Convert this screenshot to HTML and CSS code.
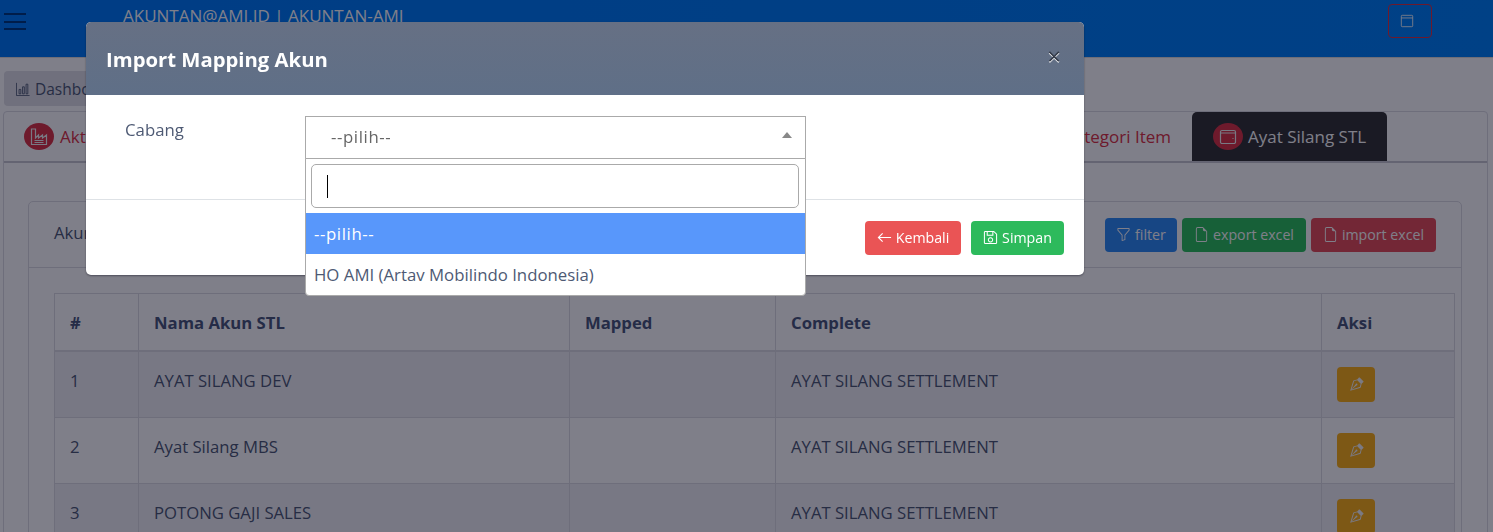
FILE: index.html
```html
<!DOCTYPE html>
<html lang="id">
<head>
    <meta charset="UTF-8">
    <meta name="viewport" content="width=device-width, initial-scale=1.0">
    <title>Import Mapping Akun</title>
    <link rel="stylesheet" href="styles.css">
</head>
<body>
    <svg class="icon-defs" aria-hidden="true">
        <symbol id="i-pen" viewBox="0 0 16 16">
            <path fill="currentColor" fill-rule="evenodd" d="M10.646.646a.5.5 0 0 1 .708 0l4 4a.5.5 0 0 1 0 .708l-1.902 1.902-.829 3.313a1.5 1.5 0 0 1-1.024 1.073L1.254 14.746 4.358 4.4A1.5 1.5 0 0 1 5.43 3.377l3.313-.828L10.646.646zm-1.8 2.908-3.173.793a.5.5 0 0 0-.358.342l-2.57 8.565 8.567-2.57a.5.5 0 0 0 .34-.357l.794-3.174-3.6-3.6z"/>
            <path fill="currentColor" fill-rule="evenodd" d="M2.832 13.228 8 9a1 1 0 1 0-1-1l-4.228 5.168-.026.086.086-.026z"/>
        </symbol>
        <symbol id="i-funnel" viewBox="0 0 16 16">
            <path fill="currentColor" d="M1.5 1.5A.5.5 0 0 1 2 1h12a.5.5 0 0 1 .5.5v2a.5.5 0 0 1-.128.334L10 8.692V13.5a.5.5 0 0 1-.342.474l-3 1A.5.5 0 0 1 6 14.5V8.692L1.628 3.834A.5.5 0 0 1 1.5 3.5v-2zm1 .5v1.308l4.372 4.858A.5.5 0 0 1 7 8.5v5.306l2-.666V8.5a.5.5 0 0 1 .128-.334L13.5 3.308V2h-11z"/>
        </symbol>
        <symbol id="i-file" viewBox="0 0 16 16">
            <path fill="currentColor" d="M14 4.5V14a2 2 0 0 1-2 2H4a2 2 0 0 1-2-2V2a2 2 0 0 1 2-2h5.5L14 4.5zm-3 0A1.5 1.5 0 0 1 9.5 3V1H4a1 1 0 0 0-1 1v12a1 1 0 0 0 1 1h8a1 1 0 0 0 1-1V4.5h-2z"/>
        </symbol>
        <symbol id="i-window" viewBox="0 0 16 16">
            <path fill="none" stroke="currentColor" d="M2.5 1.5h11a1 1 0 0 1 1 1v11a1 1 0 0 1-1 1h-11a1 1 0 0 1-1-1v-11a1 1 0 0 1 1-1zM1.5 4.5h13"/>
        </symbol>
    </svg>

    <div class="page">
        <header class="topbar">
            <div class="burger"><span></span><span></span><span></span></div>
            <div class="user-name">AKUNTAN@AMI.ID | AKUNTAN-AMI</div>
            <button class="top-btn"><svg class="icon-14"><use href="#i-window"/></svg></button>
        </header>

        <nav class="crumb-row">
            <div class="crumb">
                <svg class="icon-14" viewBox="0 0 16 16"><path fill="none" stroke="currentColor" d="M.5 1v14.5H15.5M3.5 8.5h2v5h-2zM7.5 5.5h2v8h-2zM11.5 2.5h2v11h-2z"/></svg>
                Dashboard
            </div>
        </nav>

        <section class="tabs-card">
            <div class="tabs">
                <div class="tab">
                    <span class="tab-icon">
                        <svg class="icon-18" viewBox="0 0 18 18"><path fill="none" stroke="currentColor" stroke-width="1.2" d="M1.5 1v15.5h15V7l-4 3V7l-4 3V7l-3 3V1zM4.5 12.5h9M4.5 14.5h9"/></svg>
                    </span>
                    Aktiva Tetap
                </div>
                <div class="tab tab-push">
                    Kategori Item
                </div>
                <div class="tab tab-active">
                    <span class="tab-icon">
                        <svg class="icon-18" viewBox="0 0 18 18"><path fill="none" stroke="currentColor" stroke-width="1.2" d="M3 2.5h12a1.5 1.5 0 0 1 1.5 1.5v10a1.5 1.5 0 0 1-1.5 1.5H3A1.5 1.5 0 0 1 1.5 14V4A1.5 1.5 0 0 1 3 2.5zM1.5 5h15M13.5 10.5h1"/></svg>
                    </span>
                    Ayat Silang STL
                </div>
            </div>

            <div class="card">
                <div class="card-head">
                    <span class="card-title">Akun Ayat Silang STL</span>
                    <div class="card-actions">
                        <button class="btn btn-blue"><svg class="icon-16"><use href="#i-funnel"/></svg>filter</button>
                        <button class="btn btn-green"><svg class="icon-16"><use href="#i-file"/></svg>export excel</button>
                        <button class="btn btn-red"><svg class="icon-16"><use href="#i-file"/></svg>import excel</button>
                    </div>
                </div>
                <div class="card-body">
                    <table class="data-table">
                        <thead>
                            <tr>
                                <th class="col-no">#</th>
                                <th class="col-name">Nama Akun STL</th>
                                <th class="col-mapped">Mapped</th>
                                <th class="col-complete">Complete</th>
                                <th>Aksi</th>
                            </tr>
                        </thead>
                        <tbody>
                            <tr>
                                <td>1</td>
                                <td>AYAT SILANG DEV</td>
                                <td></td>
                                <td>AYAT SILANG SETTLEMENT</td>
                                <td class="cell-action"><button class="pen-btn"><svg class="icon-15"><use href="#i-pen"/></svg></button></td>
                            </tr>
                            <tr>
                                <td>2</td>
                                <td>Ayat Silang MBS</td>
                                <td></td>
                                <td>AYAT SILANG SETTLEMENT</td>
                                <td class="cell-action"><button class="pen-btn"><svg class="icon-15"><use href="#i-pen"/></svg></button></td>
                            </tr>
                            <tr>
                                <td>3</td>
                                <td>POTONG GAJI SALES</td>
                                <td></td>
                                <td>AYAT SILANG SETTLEMENT</td>
                                <td class="cell-action"><button class="pen-btn"><svg class="icon-15"><use href="#i-pen"/></svg></button></td>
                            </tr>
                        </tbody>
                    </table>
                </div>
            </div>
        </section>
    </div>

    <div class="backdrop"></div>

    <div class="modal">
        <div class="modal-head">
            <h2>Import Mapping Akun</h2>
            <span class="modal-close">&times;</span>
        </div>
        <div class="modal-body">
            <label class="field-label">Cabang</label>
            <div class="select-wrap">
                <div class="select-box">
                    <span class="select-value">--pilih--</span>
                    <span class="caret"></span>
                </div>
                <div class="select-drop">
                    <div class="select-search"><span class="text-cursor"></span></div>
                    <div class="select-opt select-opt-on">--pilih--</div>
                    <div class="select-opt">HO AMI (Artav Mobilindo Indonesia)</div>
                </div>
            </div>
        </div>
        <div class="modal-foot">
            <button class="btn btn-back">
                <svg class="icon-16" viewBox="0 0 16 16"><path fill="none" stroke="currentColor" stroke-width="1.2" d="M15 8H1.5M6 3.5 1.5 8 6 12.5"/></svg>
                Kembali
            </button>
            <button class="btn btn-save">
                <svg class="icon-16" viewBox="0 0 16 16"><path fill="none" stroke="currentColor" stroke-width="1.1" d="M2.5 1.5h9l3 3v9a1 1 0 0 1-1 1h-11a1 1 0 0 1-1-1v-11a1 1 0 0 1 1-1zM4.5 1.5v4h6v-4M8 8.2a2.3 2.3 0 1 0 .01 0z"/></svg>
                Simpan
            </button>
        </div>
    </div>
</body>
</html>
```

FILE: styles.css
```css
html, body {
    height: 100%;
    margin: 0;
    overflow: hidden;
}

body {
    font-family: "Open Sans", "Noto Sans", Arial, sans-serif;
    font-size: 16.7px;
    color: #4e5a74;
    background-color: #fff;
}

button {
    font-family: inherit;
}

svg {
    display: block;
    flex: none;
}

.icon-defs { width: 0; height: 0; position: absolute; }
.icon-14 { width: 14px; height: 14px; }
.icon-15 { width: 15px; height: 15px; }
.icon-16 { width: 15px; height: 15px; }
.icon-18 { width: 18px; height: 18px; }

/* Halaman di belakang modal */
.topbar {
    height: 58px;
    display: flex;
    align-items: flex-start;
    background: linear-gradient(90deg, #007af6, #0082f8);
    border-bottom: 1px solid #ddd;
    box-sizing: border-box;
}

.burger {
    width: 22px;
    margin: 13px 0 0 4px;
    display: flex;
    flex-direction: column;
    gap: 5.5px;
}

.burger span {
    height: 2px;
    background-color: #003a80;
}

.user-name {
    margin: 5px 0 0 97px;
    color: #fff;
    font-size: 17px;
    line-height: 22px;
}

.top-btn {
    margin: 4px 61px 0 auto;
    width: 44px;
    height: 34px;
    padding: 0 6px 0 0;
    display: flex;
    align-items: center;
    justify-content: center;
    background: transparent;
    border: 1px solid #dc3545;
    border-radius: 4px;
    color: #fff;
}

.crumb-row {
    padding: 13px 0 5px 4px;
}

.crumb {
    width: 200px;
    height: 35px;
    padding-left: 12px;
    box-sizing: border-box;
    display: flex;
    align-items: center;
    gap: 5px;
    background-color: #e0e0e6;
    border-radius: 4px;
    font-size: 15.5px;
}

.tabs-card {
    margin: 0 5px 0 3px;
    padding-bottom: 40px;
    border: 1px solid #dcdce2;
    border-radius: 4px;
}

.tabs {
    height: 49px;
    padding-right: 100px;
    display: flex;
    border-bottom: 2px solid #c8c8d0;
}

.tab {
    display: flex;
    align-items: center;
    gap: 6px;
    padding: 0 20px;
    color: #dc3545;
    font-size: 17px;
}

.tab-push {
    margin-left: auto;
    padding-right: 21px;
}

.tab-active {
    height: 49px;
    width: 195px;
    box-sizing: border-box;
    padding: 0 0 0 21px;
    gap: 5px;
    color: #fff;
    background-color: #343434;
    border-radius: 5px 5px 0 0;
}

.tab-icon {
    width: 30px;
    height: 27px;
    display: flex;
    align-items: center;
    justify-content: center;
    background-color: #dc3545;
    border-radius: 50%;
    color: #f2f2f2;
}

.card {
    margin: 38px 25px 0 24px;
    border: 1px solid #dcdce2;
    border-radius: 5px;
}

.card-head {
    height: 66px;
    padding: 2px 25px 0;
    display: flex;
    align-items: center;
    justify-content: space-between;
    border-bottom: 1px solid #dcdce2;
    box-sizing: border-box;
}

.card-title {
    margin-bottom: 6px;
}

.card-actions {
    display: flex;
    gap: 5px;
    margin-bottom: 2px;
}

.btn {
    height: 34px;
    padding: 0;
    box-sizing: border-box;
    display: flex;
    align-items: center;
    justify-content: center;
    gap: 4px;
    border: none;
    border-radius: 4px;
    color: #fff;
    font-size: 14.2px;
}

.btn-blue { width: 72px; background-color: #2f8cf5; }
.btn-green { width: 124px; background-color: #2ec05c; }
.btn-red { width: 125px; background-color: #e64f58; }

.card-body {
    padding: 25px 6px 0 25px;
}

.data-table {
    width: 100%;
    border-collapse: collapse;
    table-layout: fixed;
}

.data-table th,
.data-table td {
    border: 1px solid #dcdce2;
    padding: 0 15px;
    text-align: left;
}

.data-table th {
    height: 56px;
    font-weight: 700;
    border-bottom-width: 2px;
    color: #4b587a;
}

.data-table td {
    height: 48px;
    padding-top: 17px;
    vertical-align: top;
    line-height: 24px;
}

.data-table td.cell-action {
    padding-top: 15px;
}

.data-table tbody tr:nth-child(odd) {
    background-color: #f1f1f4;
}

.col-no { width: 84px; box-sizing: border-box; }
.col-name { width: 431px; box-sizing: border-box; }
.col-mapped { width: 206px; box-sizing: border-box; }
.col-complete { width: 546px; box-sizing: border-box; }

.pen-btn {
    width: 38px;
    height: 35px;
    padding: 0;
    display: flex;
    align-items: center;
    justify-content: center;
    border: none;
    border-radius: 4px;
    background-color: #fbb017;
    color: #f4f4f4;
}

/* Lapisan gelap dan modal */
.backdrop {
    position: fixed;
    inset: 0;
    background-color: rgba(0, 0, 20, 0.5);
}

.modal {
    position: fixed;
    left: 86px;
    top: 22px;
    width: 998px;
    height: 253px;
    background-color: #fff;
    border-radius: 5px;
    box-shadow: 0 1px 2px rgba(0, 0, 20, 0.4);
    display: flex;
    flex-direction: column;
}

.modal-head {
    height: 73px;
    padding: 0 23px 0 20px;
    display: flex;
    align-items: center;
    justify-content: space-between;
    background: linear-gradient(180deg, #667084, #5f6f87);
    border-radius: 5px 5px 0 0;
    flex: none;
}

.modal-head h2 {
    margin: 0;
    color: #fff;
    font-size: 20.3px;
    font-weight: 700;
}

.modal-close {
    margin-bottom: 6px;
    color: #333a48;
    font-size: 24px;
    line-height: 1;
    text-shadow: 0 1px 0 #fff;
}

.modal-body {
    height: 105px;
    padding: 21px 0 0 39px;
    box-sizing: border-box;
    display: flex;
    flex: none;
    border-bottom: 1px solid #dee2e6;
}

.field-label {
    width: 180px;
    padding-top: 2px;
    font-size: 16.8px;
}

.select-wrap {
    position: relative;
    width: 501px;
}

.select-box {
    height: 43px;
    padding: 0 13px 0 25px;
    box-sizing: border-box;
    display: flex;
    align-items: center;
    justify-content: space-between;
    border: 1px solid #aaa;
    color: #666;
    font-size: 16.8px;
}

.select-value {
    margin-bottom: 2px;
    letter-spacing: 0.6px;
}

.caret {
    border-left: 5px solid transparent;
    border-right: 5px solid transparent;
    border-bottom: 6px solid #888;
    margin-bottom: 5px;
}

.select-drop {
    position: absolute;
    left: 0;
    top: 42px;
    width: 100%;
    box-sizing: border-box;
    background-color: #fff;
    border: 1px solid #aaa;
    border-radius: 0 0 4px 4px;
    font-size: 16.8px;
}

.select-search {
    height: 44px;
    margin: 5px 6px 5px 5px;
    padding-left: 15px;
    box-sizing: border-box;
    display: flex;
    align-items: center;
    border: 1px solid #aaa;
    border-radius: 5px;
}

.text-cursor {
    width: 1px;
    height: 23px;
    background-color: #000;
}

.select-opt {
    height: 41px;
    padding-left: 8px;
    display: flex;
    align-items: center;
}

.select-opt-on {
    background-color: #5897fb;
    color: #fff;
    letter-spacing: 0.6px;
}

.modal-foot {
    flex: 1;
    padding-right: 20px;
    display: flex;
    align-items: center;
    justify-content: flex-end;
    gap: 10px;
}

.btn-back { width: 96px; background-color: #ea5455; }
.btn-save { width: 93px; background-color: #2dba5c; }
```
